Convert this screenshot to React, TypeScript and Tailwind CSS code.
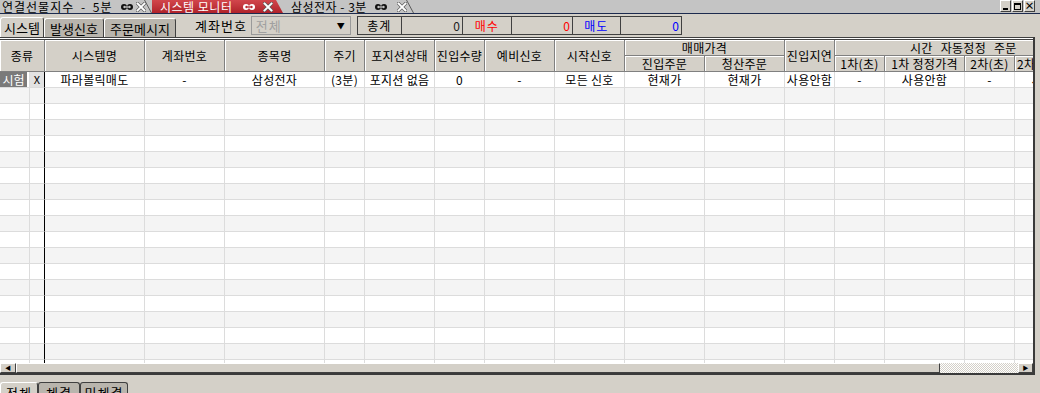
import React from 'react';

const FONT = '"Noto Sans CJK KR", "Noto Sans", "Liberation Sans", sans-serif';

function LinkIcon({ active }: { active?: boolean }) {
  const c = active ? '#ffffff' : '#111111';
  const h = active ? '#b8282f' : '#c4c4c4';
  return (
    <svg width="12" height="8" viewBox="0 0 12 8" className="shrink-0">
      <circle cx="3" cy="4" r="3" fill={c} />
      <circle cx="9" cy="4" r="3" fill={c} />
      <circle cx="3.6" cy="4" r="1.3" fill={h} />
      <circle cx="8.4" cy="4" r="1.3" fill={h} />
      <rect x="5" y="3.3" width="2" height="1.4" fill={h} />
    </svg>
  );
}

function XIcon() {
  return (
    <svg width="10" height="10" viewBox="0 0 10 10" className="shrink-0">
      <path d="M1.5 1.5 L8.5 8.5 M8.5 1.5 L1.5 8.5" stroke="#5c5c5c" strokeWidth="3.2" strokeLinecap="square" />
      <path d="M1.5 1.5 L8.5 8.5 M8.5 1.5 L1.5 8.5" stroke="#ffffff" strokeWidth="1.9" strokeLinecap="square" />
    </svg>
  );
}

function Slant() {
  return (
    <svg width="8" height="13" viewBox="0 0 8 13" className="absolute right-0 top-0">
      <path d="M0.5 0 L7.5 13" stroke="#5a5a5a" strokeWidth="1" />
    </svg>
  );
}

function WinBtn({ children }: { children: React.ReactNode }) {
  return (
    <div className="flex h-[12px] w-[11px] items-center justify-center border border-t-white border-l-white border-r-[#404040] border-b-[#404040] bg-[#d4d0c8] text-[10px] leading-none font-bold text-black">
      {children}
    </div>
  );
}

const headerCell =
  'flex items-center justify-center bg-[#d4d0c8] border-r border-b border-r-[#808080] border-b-[#808080] shadow-[inset_1px_1px_0_#ffffff] text-[12px] leading-none text-black whitespace-nowrap overflow-hidden tracking-[0.3px]';

const dataCols = [
  '시험',
  'X',
  '파라볼릭매도',
  '-',
  '삼성전자',
  '(3분)',
  '포지션 없음',
  '0',
  '-',
  '모든 신호',
  '현재가',
  '현재가',
  '사용안함',
  '-',
  '사용안함',
  '-',
  '사용안함',
];

export default function App() {
  const rows = Array.from({ length: 19 }, (_, i) => i);
  return (
    <div
      className="flex h-[393px] w-[1040px] flex-col overflow-hidden bg-[#d4d0c8] text-black"
      style={{ fontFamily: FONT }}
    >
      {/* top window tabs */}
      <div className="flex h-[14px] shrink-0 items-start border-b border-b-[#1c2a4e] bg-[#c4c4c4]">
        <div className="relative flex h-[13px] w-[152px] shrink-0 items-center pl-[2px] pr-[6px] text-[12px] leading-none">
          <span className="w-[119px] shrink-0 overflow-hidden whitespace-nowrap tracking-[1px] [word-spacing:3px]">연결선물지수 - 5분</span>
          <LinkIcon />
          <span className="w-[3px] shrink-0" />
          <XIcon />
          <Slant />
        </div>
        <div className="relative flex h-[13px] w-[131px] shrink-0 items-center bg-gradient-to-b from-[#d2464c] to-[#b0222a] pl-[8px] pr-[10px] text-[12px] leading-none text-white [clip-path:polygon(0_0,calc(100%-7px)_0,100%_100%,0_100%)]">
          <span className="w-[83px] shrink-0 overflow-hidden whitespace-nowrap tracking-[0.5px]">시스템 모니터</span>
          <LinkIcon active />
          <span className="w-[8px] shrink-0" />
          <XIcon />
        </div>
        <div className="relative flex h-[13px] w-[131px] shrink-0 items-center pl-[8px] pr-[7px] text-[12px] leading-none">
          <span className="w-[84px] shrink-0 overflow-hidden whitespace-nowrap tracking-[0.5px]">삼성전자 - 3분</span>
          <LinkIcon />
          <span className="w-[10px] shrink-0" />
          <XIcon />
          <Slant />
        </div>
        <div className="ml-auto mr-[5px] flex gap-[1px]">
          <WinBtn>
            <span className="mt-[6px] block h-[2px] w-[5px] bg-black" />
          </WinBtn>
          <WinBtn>
            <span className="block h-[7px] w-[7px] border border-black border-t-2" />
          </WinBtn>
          <WinBtn>×</WinBtn>
        </div>
      </div>

      {/* toolbar row */}
      <div className="flex h-[23px] shrink-0 items-end">
        <div className="flex h-[20px] items-stretch">
          <div className="flex w-[44px] items-center justify-center rounded-t-[3px] border border-b-0 border-t-white border-l-white border-r-[#404040] bg-[#d4d0c8] text-[13px] leading-none">
            시스템
          </div>
          <div className="mt-[1px] flex w-[60px] items-center justify-center rounded-t-[3px] border border-b-0 border-t-white border-l-white border-r-[#404040] bg-[#b9b5ad] text-[13px] leading-none">
            발생신호
          </div>
          <div className="mt-[1px] flex w-[72px] items-center justify-center rounded-t-[3px] border border-b-0 border-t-white border-l-white border-r-[#404040] bg-[#b9b5ad] text-[13px] leading-none">
            주문메시지
          </div>
        </div>
        <div className="mb-[2px] ml-[19px] flex h-[19px] items-center text-[13px] leading-none tracking-[1px]">계좌번호</div>
        <div className="mb-[2px] ml-[4px] flex h-[19px] w-[100px] items-center border border-[#9a9a9a] bg-[#d4d0c8] pl-[4px] pr-[5px] text-[13px] leading-none text-[#a0a0a0]">
          <span className="tracking-[1px]">전체</span>
          <span className="ml-auto text-[8px] text-black">▼</span>
        </div>
        <div className="mb-[2px] ml-[6px] flex h-[19px] border border-[#404040] text-[12px] leading-none">
          <div className="flex w-[44px] items-center justify-center border-r border-r-[#404040] tracking-[1px]">총계</div>
          <div className="flex w-[61px] items-center justify-end border-r border-r-[#404040] pr-[2px] text-[#202020]">0</div>
          <div className="flex w-[49px] items-center justify-center border-r border-r-[#404040] text-[#ff0000] tracking-[1px]">매수</div>
          <div className="flex w-[61px] items-center justify-end border-r border-r-[#404040] pr-[2px] text-[#ff0000]">0</div>
          <div className="flex w-[48px] items-center justify-center border-r border-r-[#404040] text-[#0000ff] tracking-[1px]">매도</div>
          <div className="flex w-[60px] items-center justify-end pr-[2px] text-[#0000ff]">0</div>
        </div>
      </div>

      {/* grid frame */}
      <div className="flex w-[1035px] shrink-0 flex-col border-t border-t-[#404040] border-r-2 border-r-[#3a3a3a] border-b-2 border-b-[#3a3a3a]">
        <div className="h-[1px] bg-white" />
        <div className="h-[1px] bg-[#404040]" />
        <div className="h-[323px] w-[1033px] overflow-hidden bg-white">
          <div className="grid w-[1095px] grid-cols-[30px_15px_100px_80px_100px_40px_70px_50px_70px_70px_80px_80px_50px_50px_80px_50px_80px] grid-rows-[16px_16px] auto-rows-[16px]">
            <div className={`${headerCell} col-span-2 row-span-2`}>종류</div>
            <div className={`${headerCell} row-span-2`}>시스템명</div>
            <div className={`${headerCell} row-span-2`}>계좌번호</div>
            <div className={`${headerCell} row-span-2`}>종목명</div>
            <div className={`${headerCell} row-span-2`}>주기</div>
            <div className={`${headerCell} row-span-2`}>포지션상태</div>
            <div className={`${headerCell} row-span-2`}>진입수량</div>
            <div className={`${headerCell} row-span-2`}>예비신호</div>
            <div className={`${headerCell} row-span-2`}>시작신호</div>
            <div className={`${headerCell} col-span-2`}>매매가격</div>
            <div className={`${headerCell} row-span-2`}>진입지연</div>
            <div className={`${headerCell} col-span-4 justify-start pl-[75px] [word-spacing:5px]`}>시간 자동정정 주문</div>
            <div className={headerCell}>진입주문</div>
            <div className={headerCell}>청산주문</div>
            <div className={headerCell}>1차(초)</div>
            <div className={headerCell}>1차 정정가격</div>
            <div className={headerCell}>2차(초)</div>
            <div className={`${headerCell} justify-start pl-[2px]`}>2차 정정가격</div>

            {rows.map((r) =>
              dataCols.map((txt, c) => {
                const bg = r % 2 === 0 ? 'bg-white' : 'bg-[#f4f4f4]';
                const border =
                  c === 1
                    ? 'border-r border-r-black border-b border-b-[#dcdcdc]'
                    : 'border-r border-r-[#dcdcdc] border-b border-b-[#dcdcdc]';
                if (r === 0) {
                  if (c === 0)
                    return (
                      <div key={`${r}-${c}`} className="flex items-center border-r border-r-[#dcdcdc] border-b border-b-[#dcdcdc] bg-white pr-[2px]">
                        <span className="flex h-[15px] w-full items-center justify-center bg-[#7a7a7a] text-[12px] leading-none text-white">
                          {txt}
                        </span>
                      </div>
                    );
                  if (c === 1)
                    return (
                      <div key={`${r}-${c}`} className={`flex items-center justify-center ${border} bg-[#e2e2e2] text-[11px] leading-none`}>
                        {txt}
                      </div>
                    );
                  return (
                    <div key={`${r}-${c}`} className={`flex items-center justify-center ${border} bg-white text-[12px] leading-none whitespace-nowrap overflow-hidden tracking-[0.3px]`}>
                      {txt}
                    </div>
                  );
                }
                return <div key={`${r}-${c}`} className={`${border} ${bg}`} />;
              })
            )}
          </div>
        </div>
        {/* horizontal scrollbar */}
        <div className="flex h-[10px] w-[1033px] bg-[#d4d0c8]">
          <div className="flex w-[16px] items-center justify-center border border-t-white border-l-white border-r-[#404040] border-b-[#404040] text-[6px] leading-none">
            ◀
          </div>
          <div className="w-[924px] border border-t-white border-l-white border-r-[#404040] border-b-[#404040] bg-[#d4d0c8]" />
          <div className="w-[78px] bg-[repeating-conic-gradient(#d4d0c8_0%_25%,#ffffff_0%_50%)] bg-size-[2px_2px]" />
          <div className="flex w-[15px] items-center justify-center border border-t-white border-l-white border-r-[#404040] border-b-[#404040] text-[6px] leading-none">
            ▶
          </div>
        </div>
      </div>

      {/* bottom area */}
      <div className="mt-[6px] h-[1px] w-full bg-[#808080]" />
      <div className="h-[1px] w-full bg-white" />
      <div className="flex h-[20px] items-start pt-[1px]">
        <div className="flex h-[20px] w-[38px] items-center justify-center rounded-t-[3px] border border-b-0 border-t-white border-l-white border-r-[#404040] bg-[#d4d0c8] text-[13px] leading-none tracking-[1px]">
          전체
        </div>
        <div className="flex h-[20px] w-[42px] items-center justify-center rounded-t-[3px] border border-b-0 border-t-[#404040] border-l-[#404040] border-r-[#404040] bg-[#b9b5ad] text-[13px] leading-none tracking-[1px]">
          체결
        </div>
        <div className="flex h-[20px] w-[48px] items-center justify-center rounded-t-[3px] border border-b-0 border-t-[#404040] border-l-[#404040] border-r-[#404040] bg-[#b9b5ad] text-[13px] leading-none tracking-[1px]">
          미체결
        </div>
      </div>
    </div>
  );
}
